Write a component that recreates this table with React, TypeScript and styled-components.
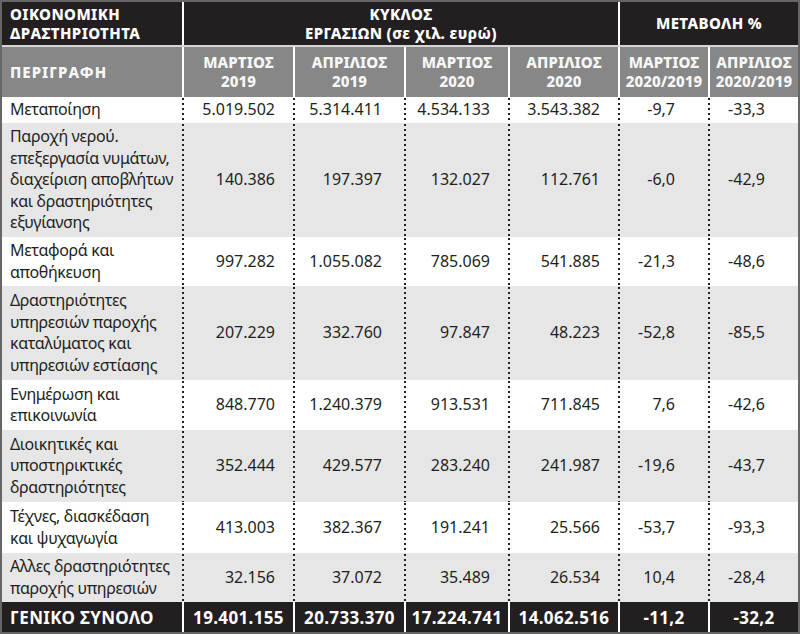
import React from "react";
import styled, { createGlobalStyle } from "styled-components";

const GlobalStyle = createGlobalStyle`
  html, body { margin: 0; padding: 0; background: #ffffff; }
  body { font-family: "Noto Sans", "Open Sans", sans-serif; color: #231f20; }
`;

const TEMPLATE = "180px 111px 111px 104px 110px 90px 90px";
const PAD_RIGHT = [0, 18, 22, 18, 18, 33, 33];

const DARK = "#231f20";
const MID = "#878787";
const LIGHT = "#e6e6e7";

const Table = styled.div`
  width: 800px;
  height: 634px;
  box-sizing: border-box;
  border: 2px solid #666666;
  display: flex;
  flex-direction: column;
  background: #ffffff;
`;

const TopHeader = styled.div`
  display: grid;
  grid-template-columns: 180px 436px 180px;
  height: 43px;
  background: ${DARK};
  color: #ffffff;
  font-weight: 800;
  font-size: 15px;
  line-height: 19px;
  letter-spacing: 0.4px;
`;

const TopCell = styled.div<{ $first?: boolean; $align?: string }>`
  display: flex;
  align-items: center;
  justify-content: ${(p) => p.$align || "center"};
  text-align: ${(p) => (p.$align === "flex-start" ? "left" : "center")};
  padding-left: ${(p) => (p.$first ? "8px" : "0")};
  border-left: ${(p) => (p.$first ? "none" : "2px solid #ffffff")};
  white-space: nowrap;
`;

const SubHeader = styled.div`
  display: grid;
  grid-template-columns: ${TEMPLATE};
  height: 50px;
  border-top: 2px solid #d6d6d6;
  background: ${MID};
  color: #f7f7f7;
  font-weight: 800;
  font-size: 15px;
  line-height: 19px;
  letter-spacing: 0.1px;
`;

const SubCell = styled.div<{ $first?: boolean }>`
  display: flex;
  align-items: center;
  justify-content: ${(p) => (p.$first ? "flex-start" : "center")};
  text-align: center;
  padding-left: ${(p) => (p.$first ? "8px" : "0")};
  border-left: ${(p) => (p.$first ? "none" : "2px solid #ffffff")};
  white-space: nowrap;
  letter-spacing: ${(p) => (p.$first ? "1px" : "inherit")};
`;

const DataRow = styled.div<{ $h: number; $shade: boolean }>`
  display: grid;
  grid-template-columns: ${TEMPLATE};
  height: ${(p) => p.$h}px;
  background: ${(p) => (p.$shade ? LIGHT : "#ffffff")};
  font-size: 16px;
  line-height: 21.5px;
  color: ${DARK};
`;

const LabelCell = styled.div`
  display: flex;
  align-items: center;
  padding-left: 8px;
  letter-spacing: -0.35px;
  white-space: nowrap;
`;

const NumCell = styled.div<{ $pr: number }>`
  display: flex;
  align-items: center;
  justify-content: flex-end;
  padding-right: ${(p) => p.$pr}px;
  background-image: linear-gradient(to bottom, ${DARK} 2px, transparent 2px);
  background-size: 2px 5px;
  background-repeat: repeat-y;
  background-position: left 1px;
  white-space: nowrap;
`;

const TotalRow = styled.div`
  display: grid;
  grid-template-columns: ${TEMPLATE};
  height: 30px;
  background: ${DARK};
  color: #ffffff;
  font-weight: 700;
  font-size: 17px;
  letter-spacing: 0.35px;
`;

const TotalCell = styled.div<{ $first?: boolean }>`
  display: flex;
  align-items: center;
  justify-content: ${(p) => (p.$first ? "flex-start" : "center")};
  padding-left: ${(p) => (p.$first ? "8px" : "0")};
  border-left: ${(p) => (p.$first ? "none" : "2px solid #ffffff")};
  white-space: nowrap;
`;

type Row = { label: string[]; values: string[]; h: number };

const rows: Row[] = [
  { label: ["Μεταποίηση"], values: ["5.019.502", "5.314.411", "4.534.133", "3.543.382", "-9,7", "-33,3"], h: 26 },
  {
    label: ["Παροχή νερού.", "επεξεργασία νυμάτων,", "διαχείριση αποβλήτων", "και δραστηριότητες", "εξυγίανσης"],
    values: ["140.386", "197.397", "132.027", "112.761", "-6,0", "-42,9"],
    h: 114,
  },
  { label: ["Μεταφορά και", "αποθήκευση"], values: ["997.282", "1.055.082", "785.069", "541.885", "-21,3", "-48,6"], h: 49 },
  {
    label: ["Δραστηριότητες", "υπηρεσιών παροχής", "καταλύματος και", "υπηρεσιών εστίασης"],
    values: ["207.229", "332.760", "97.847", "48.223", "-52,8", "-85,5"],
    h: 94,
  },
  { label: ["Ενημέρωση και", "επικοινωνία"], values: ["848.770", "1.240.379", "913.531", "711.845", "7,6", "-42,6"], h: 50 },
  {
    label: ["Διοικητικές και", "υποστηρικτικές", "δραστηριότητες"],
    values: ["352.444", "429.577", "283.240", "241.987", "-19,6", "-43,7"],
    h: 72,
  },
  { label: ["Τέχνες, διασκέδαση", "και ψυχαγωγία"], values: ["413.003", "382.367", "191.241", "25.566", "-53,7", "-93,3"], h: 51 },
  { label: ["Αλλες δραστηριότητες", "παροχής υπηρεσιών"], values: ["32.156", "37.072", "35.489", "26.534", "10,4", "-28,4"], h: 49 },
];

const subHeads = [
  ["ΜΑΡΤΙΟΣ", "2019"],
  ["ΑΠΡΙΛΙΟΣ", "2019"],
  ["ΜΑΡΤΙΟΣ", "2020"],
  ["ΑΠΡΙΛΙΟΣ", "2020"],
  ["ΜΑΡΤΙΟΣ", "2020/2019"],
  ["ΑΠΡΙΛΙΟΣ", "2020/2019"],
];

const totals = ["19.401.155", "20.733.370", "17.224.741", "14.062.516", "-11,2", "-32,2"];

const Lines = ({ lines }: { lines: string[] }) => (
  <span>
    {lines.map((l, i) => (
      <React.Fragment key={i}>
        {i > 0 && <br />}
        {l}
      </React.Fragment>
    ))}
  </span>
);

export default function App() {
  return (
    <>
      <GlobalStyle />
      <Table>
        <TopHeader>
          <TopCell $first $align="flex-start">
            <Lines lines={["ΟΙΚΟΝΟΜΙΚΗ", "ΔΡΑΣΤΗΡΙΟΤΗΤΑ"]} />
          </TopCell>
          <TopCell>
            <Lines lines={["ΚΥΚΛΟΣ", "ΕΡΓΑΣΙΩΝ (σε χιλ. ευρώ)"]} />
          </TopCell>
          <TopCell>ΜΕΤΑΒΟΛΗ %</TopCell>
        </TopHeader>
        <SubHeader>
          <SubCell $first>ΠΕΡΙΓΡΑΦΗ</SubCell>
          {subHeads.map((h, i) => (
            <SubCell key={i}>
              <Lines lines={h} />
            </SubCell>
          ))}
        </SubHeader>
        {rows.map((r, i) => (
          <DataRow key={i} $h={r.h} $shade={i % 2 === 1}>
            <LabelCell>
              <Lines lines={r.label} />
            </LabelCell>
            {r.values.map((v, j) => (
              <NumCell key={j} $pr={PAD_RIGHT[j + 1]}>
                {v}
              </NumCell>
            ))}
          </DataRow>
        ))}
        <TotalRow>
          <TotalCell $first>ΓΕΝΙΚΟ ΣΥΝΟΛΟ</TotalCell>
          {totals.map((t, i) => (
            <TotalCell key={i}>{t}</TotalCell>
          ))}
        </TotalRow>
      </Table>
    </>
  );
}
